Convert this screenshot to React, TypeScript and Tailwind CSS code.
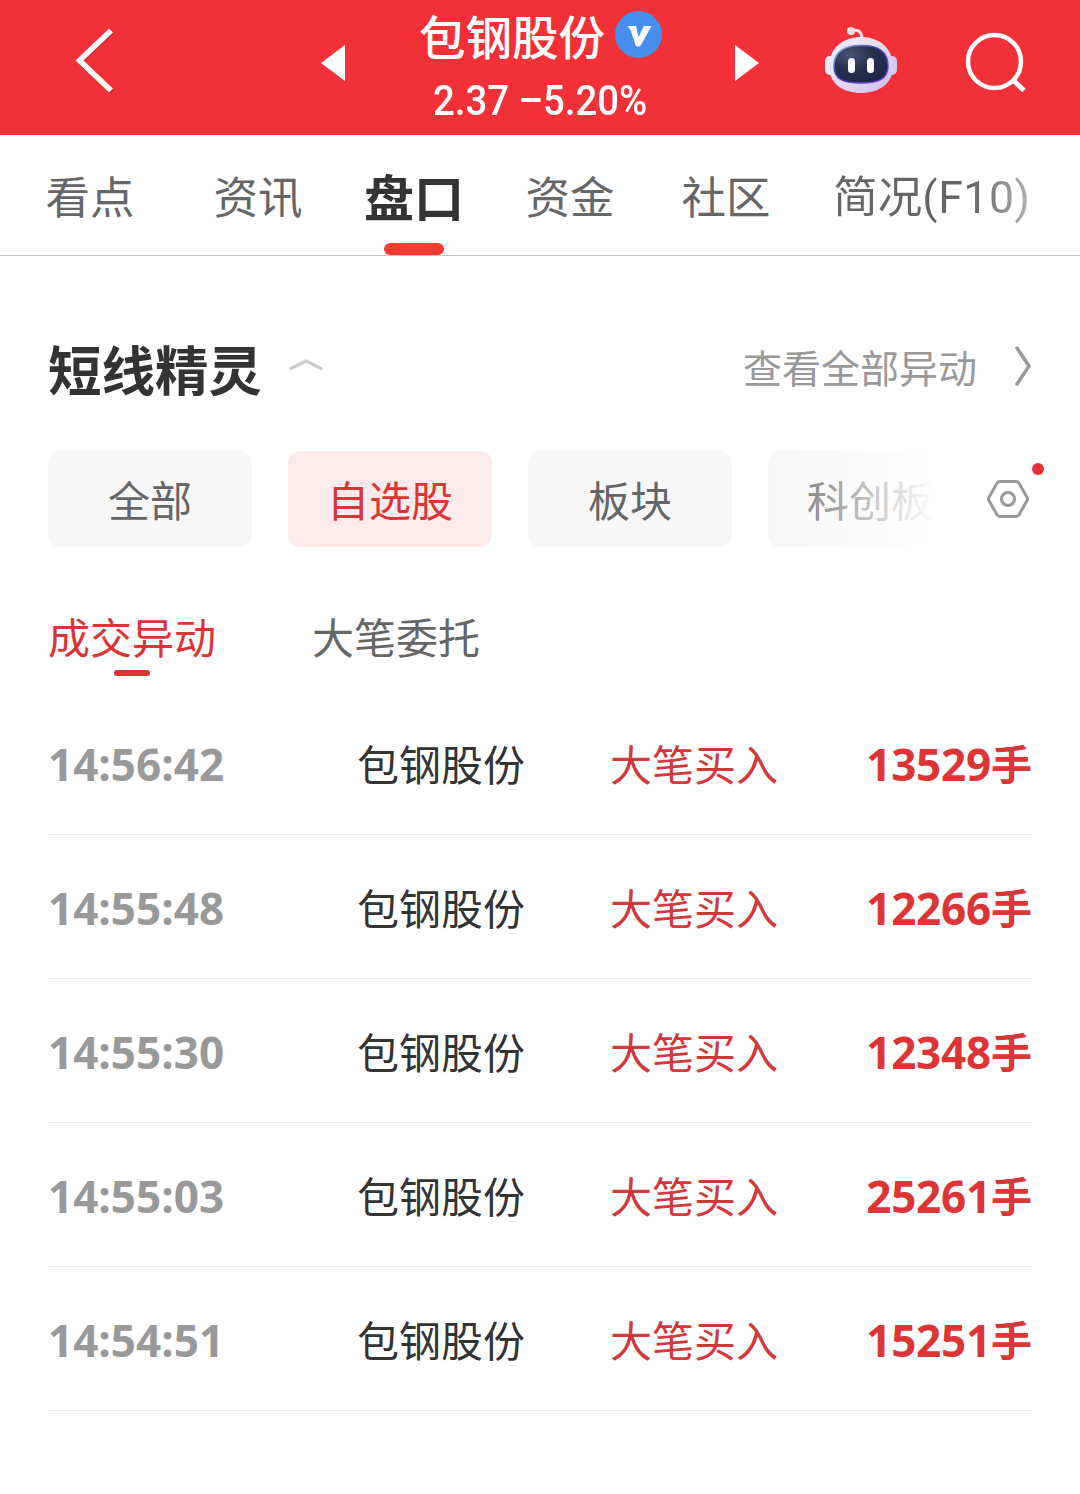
interface Trade {
  time: string;
  name: string;
  action: string;
  volume: string;
}

const tabs = ["看点", "资讯", "盘口", "资金", "社区"];

const filters = ["全部", "自选股", "板块", "科创板"];

const trades: Trade[] = [
  { time: "14:56:42", name: "包钢股份", action: "大笔买入", volume: "13529" },
  { time: "14:55:48", name: "包钢股份", action: "大笔买入", volume: "12266" },
  { time: "14:55:30", name: "包钢股份", action: "大笔买入", volume: "12348" },
  { time: "14:55:03", name: "包钢股份", action: "大笔买入", volume: "25261" },
  { time: "14:54:51", name: "包钢股份", action: "大笔买入", volume: "15251" },
];

function RobotIcon() {
  return (
    <svg className="ml-[65px] h-[68px] w-[74px] shrink-0" viewBox="0 0 74 68" fill="none">
      <defs>
        <linearGradient id="shell" x1="0" y1="0" x2="1" y2="1">
          <stop offset="0" stopColor="#f1eaf8" />
          <stop offset="0.35" stopColor="#e9e3f5" />
          <stop offset="1" stopColor="#cbbdf0" />
        </linearGradient>
        <linearGradient id="rim" x1="0" y1="0" x2="1" y2="1">
          <stop offset="0" stopColor="#7fd0f0" />
          <stop offset="0.4" stopColor="#4b3fb5" />
          <stop offset="1" stopColor="#7a3fe0" />
        </linearGradient>
        <radialGradient id="visor" cx="0.3" cy="0.25" r="0.8">
          <stop offset="0" stopColor="#4a5473" />
          <stop offset="0.5" stopColor="#27324f" />
          <stop offset="1" stopColor="#1d2747" />
        </radialGradient>
      </defs>
      <path d="M28 5C34 3 38 6 38 12" stroke="#f6dcea" strokeWidth="3" />
      <circle cx="27" cy="5" r="4" fill="#f8dbe6" />
      <rect x="1" y="30" width="10" height="19" rx="5" fill="#efeaf9" />
      <rect x="63" y="30" width="10" height="19" rx="5" fill="#d3c9f2" />
      <path d="M37 11C54 11 69 21 69 41C69 58 54 67 37 67S5 58 5 41C5 21 20 11 37 11Z" fill="url(#shell)" />
      <path d="M37 19.500C54 19.500 64 25 64 40C64 53 55 57 37 57S10 53 10 40C10 25 20 19.500 37 19.500Z" fill="url(#visor)" stroke="url(#rim)" strokeWidth="1.500" />
      <rect x="24" y="32" width="7" height="15" rx="3.500" fill="#fff" />
      <rect x="43" y="32" width="7" height="15" rx="3.500" fill="#fff" />
    </svg>
  );
}

function Header() {
  return (
    <header className="flex h-[135px] items-start bg-[#f23038] text-white">
      <svg className="mt-[27px] ml-[75px] h-[67px] w-[40px] shrink-0" viewBox="0 0 40 67" fill="none">
        <path d="M37 5 5 35 37 65" stroke="#8f2b30" strokeOpacity="0.45" strokeWidth="5" />
        <path d="M36 3.500 4.500 33.500 36 63.500" stroke="#fff" strokeWidth="5.500" />
      </svg>
      <svg className="mt-[45px] ml-[206px] h-[36px] w-[24px] shrink-0" viewBox="0 0 24 36" fill="#fff">
        <path d="M24 0V36L0 18Z" />
      </svg>
      <div className="ml-[74px] flex w-[244px] shrink-0 flex-col">
        <div className="flex h-[74px] items-center">
          <span className="mb-[4px] text-[46.5px] leading-none font-medium">包钢股份</span>
          <svg className="mb-[5px] ml-[10px] size-[47px]" viewBox="0 0 47 47">
            <circle cx="23.500" cy="23.500" r="23.500" fill="#468fec" />
            <path d="M12.500 15H21L23.500 26 29 15H36.500L26 34C24.500 36 21.500 36 20.500 34L15.500 19Z" fill="#fff" />
          </svg>
        </div>
        <div className="ml-[14px] flex h-[54px] w-[240px] origin-left scale-x-[0.912] items-center font-[Roboto] text-[42px] leading-none font-medium whitespace-pre">
          2.37 –5.20%
        </div>
      </div>
      <svg className="mt-[45px] ml-[72px] h-[36px] w-[24px] shrink-0" viewBox="0 0 24 36" fill="#fff">
        <path d="M0 0V36L24 18Z" />
      </svg>
      <div className="mt-[26px]">
        <RobotIcon />
      </div>
      <svg className="mt-[32px] ml-[66px] h-[62px] w-[62px] shrink-0" viewBox="0 0 62 62" fill="none" stroke="#fff">
        <circle cx="30.500" cy="29.500" r="26.500" strokeWidth="4.500" />
        <path d="M49 48 60 58.500" strokeWidth="5" />
      </svg>
    </header>
  );
}

function Tabs() {
  return (
    <nav className="flex h-[121px] border-b border-[#c4c4c4] pl-[24px] text-[44.5px] text-[#666]">
      {tabs.map((tab) =>
        tab === "盘口" ? (
          <div key={tab} className="flex w-[156px] flex-col items-center text-[50px] font-bold text-[#333]">
            <span className="flex h-[108px] items-center pt-[12px] leading-none">{tab}</span>
            <span className="h-[12px] w-[60px] rounded-full bg-[#f93a32]" />
          </div>
        ) : (
          <div key={tab} className="flex h-[108px] w-[156px] items-center justify-center pt-[12px] leading-none first:-ml-[12px] first:mr-[12px]">
            {tab}
          </div>
        )
      )}
      <div className="flex h-[108px] w-[256px] items-center justify-center pt-[15px] leading-none">
        <span className="bg-linear-to-r from-[#666] from-70% to-[#b5b5b5] bg-clip-text py-2 text-transparent">
          简况<span className="font-[Roboto] tracking-[0.6px]">(F10)</span>
        </span>
      </div>
    </nav>
  );
}

function FilterBar() {
  return (
    <div className="flex items-center">
      <div className="relative flex w-[886px] gap-[36px] overflow-hidden">
        {filters.map((item) => (
          <button
            key={item}
            className={`h-[96px] w-[204px] shrink-0 rounded-[12px] text-[42px] leading-none ${
              item === "自选股" ? "bg-[#fdeaea] text-[#d93535]" : "bg-[#f7f7f7] text-[#666]"
            }`}
          >
            {item}
          </button>
        ))}
        {/* fade at the scroll edge */}
        <div className="absolute top-0 right-0 h-full w-[166px] bg-linear-to-r from-white/0 to-white/95 to-95%" />
      </div>
      <div className="relative ml-[52px] h-[40px] w-[44px]">
        <svg className="h-[40px] w-[44px]" viewBox="0 0 44 40" fill="none" stroke="#999" strokeWidth="3">
          <path d="M14 2.500H30Q32 2.500 33 4.200L41 18.200Q42 20 41 21.800L33 35.800Q32 37.500 30 37.500H14Q12 37.500 11 35.800L3 21.800Q2 20 3 18.200L11 4.200Q12 2.500 14 2.500Z" />
          <circle cx="22" cy="20" r="6.500" />
        </svg>
        <span className="absolute -top-[16px] left-[46px] size-[12px] rounded-full bg-[#e03238]" />
      </div>
    </div>
  );
}

function TradeRow({ trade }: { trade: Trade }) {
  return (
    <li className="flex h-[144px] items-center border-b border-[#ededed] text-[42px] leading-none">
      <span className="w-[309px] pt-[3px] font-['Open_Sans'] text-[44px] font-bold text-[#999]">{trade.time}</span>
      <span className="w-[253px] text-[#333]">{trade.name}</span>
      <span className="text-[#d03a3a]">{trade.action}</span>
      <span className="ml-auto flex items-center font-bold text-[#dc3535]">
        <span className="pt-[3px] font-['Open_Sans'] text-[44px] tracking-[-0.2px]">{trade.volume}</span>
        <span className="text-[41px]">手</span>
      </span>
    </li>
  );
}

export default function App() {
  return (
    <div className="h-[1494px] w-[1080px] overflow-hidden bg-white font-['Noto_Sans_CJK_SC',sans-serif]">
      <Header />
      <Tabs />
      <main className="px-[48px]">
        <div className="mt-[85px] flex h-[54px] items-center">
          <h2 className="text-[53.5px] leading-none font-bold text-[#333]">短线精灵</h2>
          <svg className="mb-[8px] ml-[26px] h-[16px] w-[36px]" viewBox="0 0 36 16" fill="none">
            <path d="M3 12.500 18 5 33 12.500" stroke="#ccc" strokeWidth="3.500" strokeLinecap="round" strokeLinejoin="round" />
          </svg>
          <span className="mb-[4px] ml-auto text-[39px] leading-none text-[#999]">查看全部异动</span>
          <svg className="mb-[5px] ml-[37px] h-[42px] w-[18px]" viewBox="0 0 18 42" fill="none">
            <path d="M3 3 15 21 3 39" stroke="#999" strokeWidth="3.500" strokeLinecap="round" strokeLinejoin="round" />
          </svg>
        </div>
        <div className="mt-[56px]">
          <FilterBar />
        </div>
        <div className="mt-[67px] flex h-[77px] gap-[96px] text-[42px] leading-[44px]">
          <div className="flex flex-col items-center text-[#d93535]">
            <span>成交异动</span>
            <span className="mt-[12px] h-[6px] w-[36px] rounded-full bg-[#d93535]" />
          </div>
          <span className="text-[#666]">大笔委托</span>
        </div>
        <ul>
          {trades.map((trade) => (
            <TradeRow key={trade.time} trade={trade} />
          ))}
        </ul>
      </main>
    </div>
  );
}
